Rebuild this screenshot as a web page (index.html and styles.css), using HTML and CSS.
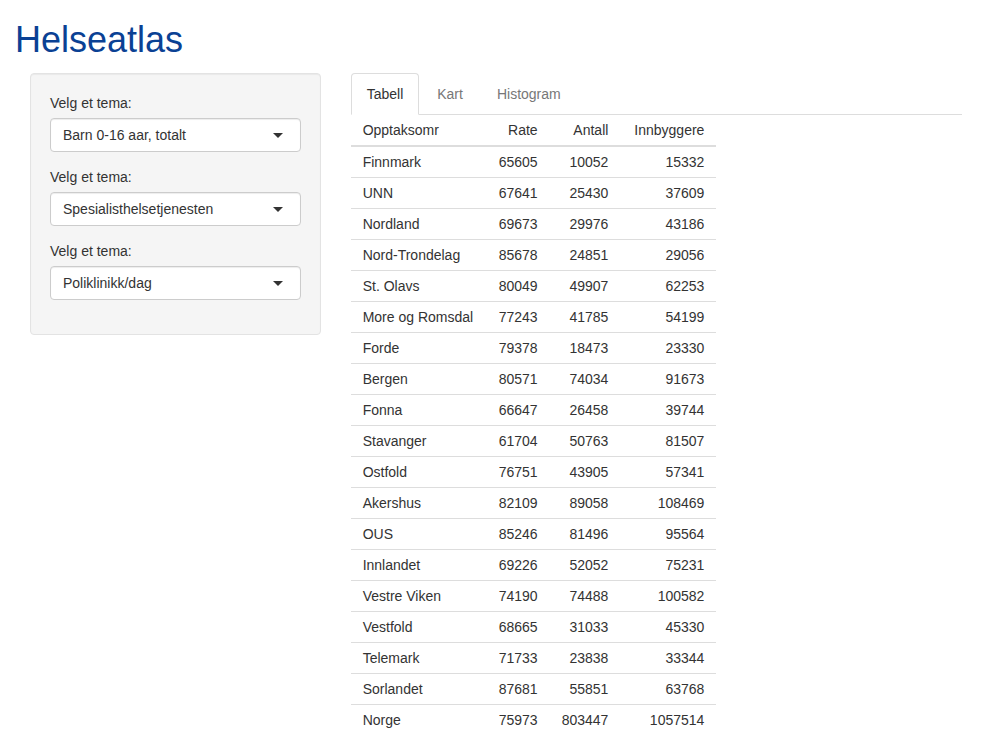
FILE: index.html
```html
<!DOCTYPE html>
<html lang="no">
<head>
<meta charset="utf-8">
<title>Helseatlas</title>
<link rel="stylesheet" href="styles.css">
</head>
<body>
<div class="page">
  <h1 class="title">Helseatlas</h1>
  <div class="layout">
    <div class="side-col">
      <div class="well">
        <div class="form-group">
          <label class="control-label">Velg et tema:</label>
          <div class="select"><span>Barn 0-16 aar, totalt</span><i class="caret"></i></div>
        </div>
        <div class="form-group">
          <label class="control-label">Velg et tema:</label>
          <div class="select"><span>Spesialisthelsetjenesten</span><i class="caret"></i></div>
        </div>
        <div class="form-group">
          <label class="control-label">Velg et tema:</label>
          <div class="select"><span>Poliklinikk/dag</span><i class="caret"></i></div>
        </div>
      </div>
    </div>
    <div class="main-col">
      <ul class="nav-tabs">
        <li class="tab active"><a>Tabell</a></li>
        <li class="tab"><a>Kart</a></li>
        <li class="tab"><a>Histogram</a></li>
      </ul>
      <table class="data">
        <thead>
          <tr><th class="l c1">Opptaksomr</th><th class="c2">Rate</th><th class="c3">Antall</th><th class="c4">Innbyggere</th></tr>
        </thead>
        <tbody>
          <tr><td class="l">Finnmark</td><td>65605</td><td>10052</td><td>15332</td></tr>
          <tr><td class="l">UNN</td><td>67641</td><td>25430</td><td>37609</td></tr>
          <tr><td class="l">Nordland</td><td>69673</td><td>29976</td><td>43186</td></tr>
          <tr><td class="l">Nord-Trondelag</td><td>85678</td><td>24851</td><td>29056</td></tr>
          <tr><td class="l">St. Olavs</td><td>80049</td><td>49907</td><td>62253</td></tr>
          <tr><td class="l">More og Romsdal</td><td>77243</td><td>41785</td><td>54199</td></tr>
          <tr><td class="l">Forde</td><td>79378</td><td>18473</td><td>23330</td></tr>
          <tr><td class="l">Bergen</td><td>80571</td><td>74034</td><td>91673</td></tr>
          <tr><td class="l">Fonna</td><td>66647</td><td>26458</td><td>39744</td></tr>
          <tr><td class="l">Stavanger</td><td>61704</td><td>50763</td><td>81507</td></tr>
          <tr><td class="l">Ostfold</td><td>76751</td><td>43905</td><td>57341</td></tr>
          <tr><td class="l">Akershus</td><td>82109</td><td>89058</td><td>108469</td></tr>
          <tr><td class="l">OUS</td><td>85246</td><td>81496</td><td>95564</td></tr>
          <tr><td class="l">Innlandet</td><td>69226</td><td>52052</td><td>75231</td></tr>
          <tr><td class="l">Vestre Viken</td><td>74190</td><td>74488</td><td>100582</td></tr>
          <tr><td class="l">Vestfold</td><td>68665</td><td>31033</td><td>45330</td></tr>
          <tr><td class="l">Telemark</td><td>71733</td><td>23838</td><td>33344</td></tr>
          <tr><td class="l">Sorlandet</td><td>87681</td><td>55851</td><td>63768</td></tr>
          <tr><td class="l">Norge</td><td>75973</td><td>803447</td><td>1057514</td></tr>
        </tbody>
      </table>
    </div>
  </div>
</div>
</body>
</html>
```
FILE: styles.css
```css
* { box-sizing: border-box; }
html, body {
  margin: 0;
  padding: 0;
  background: #fff;
}
body {
  font-family: "Liberation Sans", Arial, Helvetica, sans-serif;
  font-size: 14px;
  line-height: 20px;
  color: #333;
}
.page {
  padding: 0 15px;
}
.title {
  margin: 20px 0 13px 0;
  font-size: 36px;
  font-weight: 500;
  line-height: 40px;
  color: #0a4194;
}
.layout {
  display: flex;
  align-items: flex-start;
}
.side-col {
  width: 33.3333%;
  padding: 0 15px;
  flex: none;
}
.main-col {
  width: 66.6667%;
  padding: 0 15px;
  flex: none;
}
.well {
  background: #f5f5f5;
  border: 1px solid #e3e3e3;
  border-radius: 4px;
  padding: 19px;
  box-shadow: inset 0 1px 1px rgba(0,0,0,0.05);
}
.form-group {
  margin-bottom: 15px;
}
.control-label {
  display: block;
  margin-bottom: 5px;
  font-weight: normal;
  line-height: 20px;
}
.select {
  height: 34px;
  border: 1px solid #ccc;
  border-radius: 4px;
  background: #fff;
  box-shadow: inset 0 1px 1px rgba(0,0,0,0.075);
  padding: 6px 17px 6px 12px;
  display: flex;
  align-items: center;
  justify-content: space-between;
  color: #333;
}
.caret {
  width: 0;
  height: 0;
  border-style: solid;
  border-width: 5px 5px 0 5px;
  border-color: #333 transparent transparent transparent;
  margin-top: 1px;
}
.nav-tabs {
  list-style: none;
  margin: 0;
  padding: 0;
  display: flex;
  border-bottom: 1px solid #ddd;
}
.tab {
  margin-right: 2px;
  margin-bottom: -1px;
}
.tab a {
  display: block;
  padding: 10px 15px;
  line-height: 20px;
  border: 1px solid transparent;
  border-radius: 4px 4px 0 0;
  color: #777;
}
.tab.active a {
  color: #333;
  background: #fff;
  border-color: #ddd #ddd transparent #ddd;
}
.data {
  border-collapse: collapse;
  border-spacing: 0;
  margin-bottom: 20px;
}
.data th, .data td {
  padding: 5px 12px;
  line-height: 20px;
  text-align: right;
  font-weight: normal;
  vertical-align: top;
}
.data th {
  border-bottom: 2px solid #ddd;
}
.data td {
  border-top: 1px solid #ddd;
}
.data tbody tr:first-child td {
  border-top: 0;
}
.data .l {
  text-align: left;
}
.data .c1 { width: 136px; }
.data .c2 { width: 63px; }
.data .c3 { width: 70px; }
.data .c4 { width: 96px; }
```
